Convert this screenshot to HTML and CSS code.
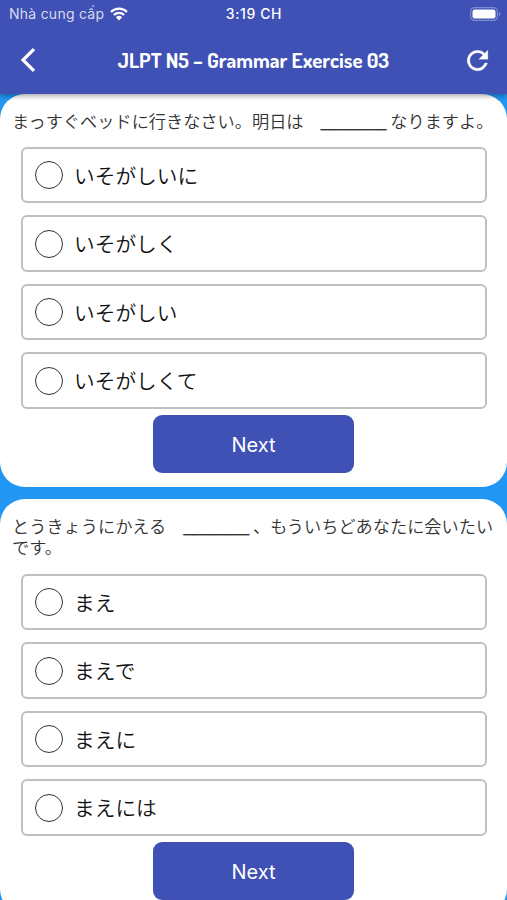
FILE: index.html
```html
<!DOCTYPE html>
<html lang="ja">
<head>
    <meta charset="UTF-8">
    <meta name="viewport" content="width=device-width, initial-scale=1.0">
    <title>JLPT N5 – Grammar Exercise 03</title>
    <link rel="stylesheet" href="styles.css">
</head>
<body>

    <header class="app-header">
        <div class="status-bar">
            <div class="carrier">
                <span class="carrier-name">Nhà cung cấp</span>
                <svg class="wifi" width="18" height="14" viewBox="0 0 18 14">
                    <path d="M1 4.9a11.5 11.5 0 0 1 16 0M3.9 8a7.3 7.3 0 0 1 10.2 0" fill="none" stroke="#fff" stroke-width="2.2"/>
                    <path d="M5.9 10.3a4.5 4.5 0 0 1 6.2 0L9 13.4z" fill="#fff"/>
                </svg>
            </div>
            <span class="clock">3:19 CH</span>
            <svg class="battery" width="31" height="14" viewBox="0 0 31 14">
                <rect x=".6" y=".6" width="26.8" height="12.8" rx="4" fill="none" stroke="#7f8ad0" stroke-width="1.2"/>
                <rect x="2.5" y="2.5" width="23" height="9" rx="2.2" fill="#fff"/>
                <path d="M29 4.8v4.4q1.5-.7 1.5-2.2T29 4.8z" fill="#7f8ad0"/>
            </svg>
        </div>
        <div class="nav-bar">
            <svg class="back" width="16" height="24" viewBox="0 0 16 24">
                <path d="M14 1.2L3 12l11 10.8" fill="none" stroke="#fff" stroke-width="3.2"/>
            </svg>
            <h1>JLPT N5 – Grammar Exercise 03</h1>
            <svg class="refresh" width="31" height="31" viewBox="0 0 24 24">
                <path d="M17.65 6.35A7.96 7.96 0 0 0 12 4a8 8 0 1 0 7.73 10h-2.08A6 6 0 1 1 12 6c1.66 0 3.14.69 4.22 1.78L13 11h7V4l-2.35 2.35z" fill="#fff" stroke="#fff" stroke-width=".2"/>
            </svg>
        </div>
    </header>

    <main class="questions">
        <section class="card">
            <p class="question">まっすぐベッドに行きなさい。明日は　<span class="blank">_______</span> なりますよ。</p>
            <form class="options">
                <label class="option"><input type="radio" name="q1"><span>いそがしいに</span></label>
                <label class="option"><input type="radio" name="q1"><span>いそがしく</span></label>
                <label class="option"><input type="radio" name="q1"><span>いそがしい</span></label>
                <label class="option"><input type="radio" name="q1"><span>いそがしくて</span></label>
            </form>
            <button type="button" class="next">Next</button>
        </section>

        <section class="card">
            <p class="question">とうきょうにかえる　<span class="blank">_______</span> 、もういちどあなたに会いたいです。</p>
            <form class="options">
                <label class="option"><input type="radio" name="q2"><span>まえ</span></label>
                <label class="option"><input type="radio" name="q2"><span>まえで</span></label>
                <label class="option"><input type="radio" name="q2"><span>まえに</span></label>
                <label class="option"><input type="radio" name="q2"><span>まえには</span></label>
            </form>
            <button type="button" class="next">Next</button>
        </section>
    </main>

</body>
</html>
```
FILE: styles.css
```css
* {
    box-sizing: border-box;
}
body {
    margin: 0;
    height: 900px;
    overflow: hidden;
    background-color: #2196f3;
    font-family: Inter, "Noto Sans CJK JP", sans-serif;
}
.app-header {
    position: relative;
    z-index: 1;
    height: 94px;
    background-color: #3f51b5;
    color: #fff;
    box-shadow: 0 2px 5px rgba(0, 0, 0, 0.35);
}
.status-bar {
    display: grid;
    grid-template-columns: 1fr auto 1fr;
    align-items: center;
    height: 27px;
    padding: 0 6px 0 9px;
    font-size: 14px;
}
.carrier {
    display: flex;
    align-items: center;
    gap: 6px;
}
.carrier-name {
    color: #d9dcf0;
    letter-spacing: 0.25px;
}
.clock {
    padding-right: 2px;
    font-weight: 500;
    letter-spacing: 0.6px;
}
.battery {
    justify-self: end;
}
.nav-bar {
    display: flex;
    align-items: center;
    justify-content: space-between;
    height: 66px;
    padding: 0 14px 0 20px;
}
h1 {
    margin: 0 0 0 9px;
    font-family: Dosis, Roboto, sans-serif;
    font-size: 20.85px;
    font-weight: 700;
}
.questions {
    display: flex;
    flex-direction: column;
    gap: 12px;
}
.card {
    display: flex;
    flex-direction: column;
    padding: 15.5px 12px 14px;
    border-radius: 25px;
    background-color: #fff;
}
.question {
    margin: 0 -6px 15.9px 0;
    color: #333;
    font-family: "Noto Sans CJK JP", sans-serif;
    font-size: 17.2px;
    font-weight: 350;
    line-height: 21.5px;
}
.blank {
    font-family: "Liberation Sans", sans-serif;
    font-size: 16.9px;
    line-height: 1;
    vertical-align: 1px;
    -webkit-text-stroke: 0.2px #444;
}
.options {
    display: flex;
    flex-direction: column;
    gap: 12px;
    margin: 0 8px 0 9px;
}
.option {
    display: flex;
    align-items: center;
    gap: 11px;
    height: 56.5px;
    padding-left: 12px;
    border: 2px solid #c0c0c0;
    border-radius: 6px;
    color: #111;
    font-family: "Noto Sans CJK JP", sans-serif;
    font-size: 20.7px;
    font-weight: 350;
}
.option span {
    padding-bottom: 1px;
}
.option input {
    appearance: none;
    width: 28px;
    height: 28px;
    margin: 0;
    border: 1px solid #333;
    border-radius: 50%;
}
.next {
    align-self: center;
    width: 201px;
    height: 58px;
    margin-top: 6.5px;
    padding: 1px 0 0;
    border: none;
    border-radius: 9px;
    background-color: #3f51b5;
    color: #fff;
    font-family: Inter, sans-serif;
    font-size: 20px;
}
```
